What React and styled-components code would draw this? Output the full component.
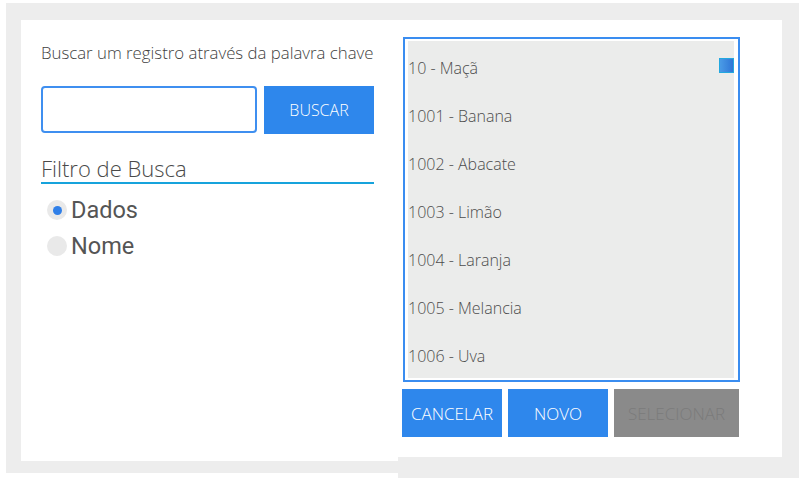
import styled, { createGlobalStyle } from 'styled-components';

const GlobalStyle = createGlobalStyle`
  html, body {
    margin: 0;
    padding: 0;
    background: #fff;
    font-family: "Open Sans", "Noto Sans", sans-serif;
  }
`;

const items = [
  '10 - Maçã',
  '1001 - Banana',
  '1002 - Abacate',
  '1003 - Limão',
  '1004 - Laranja',
  '1005 - Melancia',
  '1006 - Uva',
];

const App = () => {
  return (
    <Page>
      <GlobalStyle />
      <SearchPanel>
        <Hint>Buscar um registro através da palavra chave</Hint>
        <SearchRow>
          <SearchInput type="text" />
          <Button $width={110}>BUSCAR</Button>
        </SearchRow>
        <FilterTitle>Filtro de Busca</FilterTitle>
        <RadioList>
          <RadioItem>
            <RadioDot $checked />
            Dados
          </RadioItem>
          <RadioItem>
            <RadioDot />
            Nome
          </RadioItem>
        </RadioList>
      </SearchPanel>

      <ResultPanel>
        <ListBox>
          <ListInner>
            {items.map((item, i) => (
              <ListItem key={i}>
                {item}
                {i === 0 && <Thumb />}
              </ListItem>
            ))}
          </ListInner>
        </ListBox>
        <Actions>
          <Button $width={100} $size={17}>CANCELAR</Button>
          <Button $width={100} $size={17}>NOVO</Button>
          <Button $width={125} $size={17} $disabled>
            SELECIONAR
          </Button>
        </Actions>
      </ResultPanel>
    </Page>
  );
};

const Page = styled.div`
  display: flex;
  align-items: flex-start;
  padding: 3px 0 0 6px;
  width: 799px;
  height: 480px;
  box-sizing: border-box;
  overflow: hidden;
`;

const SearchPanel = styled.div`
  width: 392px;
  height: 470px;
  box-sizing: border-box;
  border: solid #ededed;
  border-width: 17px 0 12px 15px;
  background: #fff;
  padding: 20px 0 0 20px;
  display: flex;
  flex-direction: column;
`;

const Hint = styled.div`
  font-size: 16.8px;
  font-weight: 300;
  color: #3f3f3f;
  line-height: 25px;
  width: 340px;
  white-space: nowrap;
`;

const SearchRow = styled.div`
  display: flex;
  gap: 7px;
  margin-top: 21px;
  height: 47px;
`;

const SearchInput = styled.input`
  width: 216px;
  height: 47px;
  box-sizing: border-box;
  border: 2px solid #3f8ff0;
  border-radius: 4px;
  outline: none;
  padding: 0 8px;
  background: #fff;
`;

const Button = styled.button`
  width: ${(p) => p.$width}px;
  height: 48px;
  border: none;
  border-radius: 0;
  padding: 0;
  background: ${(p) => (p.$disabled ? '#8a8a8a' : '#2e87ec')};
  color: ${(p) => (p.$disabled ? '#7b7b7b' : '#fff')};
  font-family: "Open Sans", "Noto Sans", sans-serif;
  font-weight: 300;
  font-size: ${(p) => p.$size || 16}px;
  letter-spacing: 0;
`;

const FilterTitle = styled.div`
  margin-top: 21px;
  width: 333px;
  font-size: 22px;
  font-weight: 300;
  color: #4a4a4a;
  line-height: 28px;
  border-bottom: 2px solid #16a3dc;
`;

const RadioList = styled.div`
  display: flex;
  flex-direction: column;
  margin-top: 12px;
  padding-left: 6px;
  gap: 8px;
`;

const RadioItem = styled.label`
  display: flex;
  align-items: center;
  gap: 4px;
  height: 28px;
  font-family: Roboto, "Noto Sans", sans-serif;
  font-size: 23.5px;
  color: #555;
`;

const RadioDot = styled.span`
  width: 20px;
  height: 20px;
  border-radius: 50%;
  background: #e9e9e9;
  display: flex;
  align-items: center;
  justify-content: center;

  &::after {
    content: '';
    display: ${(p) => (p.$checked ? 'block' : 'none')};
    width: 9px;
    height: 9px;
    border-radius: 50%;
    background: #2f7fe8;
  }
`;

const ResultPanel = styled.div`
  width: 401px;
  height: 475px;
  box-sizing: border-box;
  border: solid #ededed;
  border-width: 17px 17px 21px 0;
  background: #fff;
  padding: 17px 0 0 4px;
  display: flex;
  flex-direction: column;
  gap: 7px;
`;

const ListBox = styled.div`
  width: 337px;
  height: 345px;
  box-sizing: border-box;
  border: 2px solid #3a8df0;
  padding: 2px 4px 2px 3px;
  background: #fff;
  margin-left: 1px;
`;

const ListInner = styled.div`
  height: 100%;
  background: #ebeceb;
  overflow: hidden;
  padding-top: 3px;
  box-sizing: border-box;
`;

const ListItem = styled.div`
  position: relative;
  height: 48px;
  line-height: 48px;
  font-size: 16px;
  font-weight: 300;
  color: #4d4d4d;
  white-space: nowrap;
`;

const Thumb = styled.span`
  position: absolute;
  right: 0;
  top: 14px;
  width: 15px;
  height: 15px;
  box-sizing: border-box;
  border: 1px solid #22a8e0;
  background: linear-gradient(90deg, #4a9be6, #2f76d6);
`;

const Actions = styled.div`
  display: flex;
  gap: 6px;
`;

export default App;
